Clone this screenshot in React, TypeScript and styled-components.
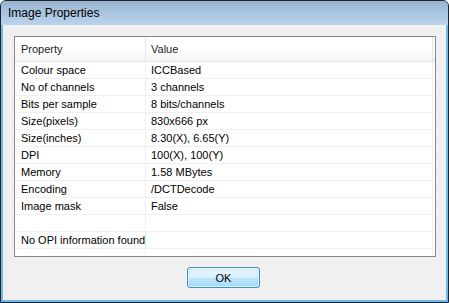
import React from "react";
import styled, { createGlobalStyle } from "styled-components";

const Global = createGlobalStyle`
  html, body { margin: 0; padding: 0; background: #ffffff; }
  * { box-sizing: border-box; }
`;

const Window = styled.div`
  width: 449px;
  height: 303px;
  display: flex;
  flex-direction: column;
  border: 1px solid #1c2630;
  border-radius: 6px 6px 0 0;
  background: #6fb9e6;
  padding: 0 1px 1px;
  overflow: hidden;
`;

const TitleBar = styled.div`
  height: 24px;
  margin: 0 -1px;
  display: flex;
  align-items: center;
  padding-left: 7px;
  background: linear-gradient(to bottom, #98b3d1 0%, #aac4e0 50%, #bbd3ec 100%);
  font-family: "Segoe UI", "Liberation Sans", Arial, sans-serif;
  font-size: 12px;
  color: #000000;
  flex-shrink: 0;
`;

const Client = styled.div`
  flex: 1;
  margin: 0 1px 1px;
  background: #f0f0f0;
  display: flex;
  flex-direction: column;
  padding: 11px 11px 0 11px;
  font-family: Tahoma, "Liberation Sans", Arial, sans-serif;
  font-size: 11px;
  color: #000000;
`;

const ListBox = styled.div`
  width: 422px;
  height: 221px;
  border: 1px solid #828790;
  background: #ffffff;
  overflow: hidden;
  display: flex;
  flex-direction: column;
`;

const HeaderRow = styled.div`
  display: grid;
  grid-template-columns: 131px 287px;
  height: 25px;
  background: linear-gradient(to bottom, #ffffff 0%, #ffffff 45%, #f3f4f6 100%);
  border-bottom: 1px solid #e5e5e5;
  flex-shrink: 0;
`;

const HeaderCell = styled.div<{ $first?: boolean }>`
  display: flex;
  align-items: center;
  padding-left: ${(p) => (p.$first ? "6px" : "5px")};
  border-right: 1px solid #e3e5e8;
  color: #1e1e1e;
`;

const Row = styled.div`
  display: grid;
  grid-template-columns: 131px 287px;
  height: 17px;
  border-bottom: 1px solid #f0f0f0;
  flex-shrink: 0;
`;

const Cell = styled.div<{ $first?: boolean }>`
  display: flex;
  align-items: center;
  padding-left: ${(p) => (p.$first ? "6px" : "5px")};
  border-right: 1px solid #f0f0f0;
  white-space: nowrap;
  overflow: visible;
`;

const Footer = styled.div`
  display: flex;
  justify-content: center;
  padding-top: 10px;
  padding-right: 2px;
`;

const Button = styled.button`
  width: 73px;
  height: 21px;
  border: 1px solid #3c8fc8;
  border-radius: 3px;
  background: linear-gradient(to bottom, #eaf6fd 0%, #d9f0fc 50%, #bee6fd 51%, #a7d9f5 100%);
  box-shadow: inset 0 0 0 1px rgba(255, 255, 255, 0.7), inset 0 0 2px 1px #98d2f1;
  font-family: Tahoma, "Liberation Sans", Arial, sans-serif;
  font-size: 11px;
  color: #000000;
  padding: 0;
`;

const rows: [string, string][] = [
  ["Colour space", "ICCBased"],
  ["No of channels", "3 channels"],
  ["Bits per sample", "8 bits/channels"],
  ["Size(pixels)", "830x666 px"],
  ["Size(inches)", "8.30(X), 6.65(Y)"],
  ["DPI", "100(X), 100(Y)"],
  ["Memory", "1.58 MBytes"],
  ["Encoding", "/DCTDecode"],
  ["Image mask", "False"],
  ["", ""],
  ["No OPI information found", ""],
  ["", ""],
];

export default function App() {
  return (
    <>
      <Global />
      <Window>
        <TitleBar>Image Properties</TitleBar>
        <Client>
          <ListBox>
            <HeaderRow>
              <HeaderCell $first>Property</HeaderCell>
              <HeaderCell>Value</HeaderCell>
            </HeaderRow>
            {rows.map(([k, v], i) => (
              <Row key={i}>
                <Cell $first>{k}</Cell>
                <Cell>{v}</Cell>
              </Row>
            ))}
          </ListBox>
          <Footer>
            <Button>OK</Button>
          </Footer>
        </Client>
      </Window>
    </>
  );
}
